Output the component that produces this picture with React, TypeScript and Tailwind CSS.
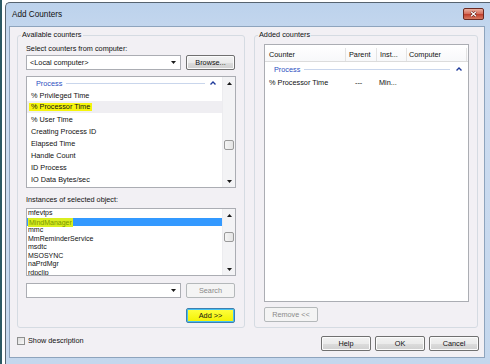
const counters = [
  '% Privileged Time',
  '% Processor Time',
  '% User Time',
  'Creating Process ID',
  'Elapsed Time',
  'Handle Count',
  'ID Process',
  'IO Data Bytes/sec',
];

const instances = ['mfevtps', 'MindManager', 'mmc', 'MmReminderService', 'msdtc', 'MSOSYNC', 'naPrdMgr', 'rdpclip'];

function Tri({ down }: { down?: boolean }) {
  return (
    <svg width="5" height="3" viewBox="0 0 5 3">
      <polygon points={down ? '0,0 5,0 2.5,3' : '0,3 5,3 2.5,0'} fill="#1a1a1a" />
    </svg>
  );
}

function Caret() {
  return (
    <svg width="6" height="4" viewBox="0 0 6 4">
      <polyline points="0.5,3.5 3,1 5.5,3.5" fill="none" stroke="#1e3a9a" strokeWidth="1.4" />
    </svg>
  );
}

function Scrollbar({ thumbTop }: { thumbTop: string }) {
  return (
    <div className="w-[13px] shrink-0 flex flex-col bg-[#f3f3f5] border-l border-[#ececef]">
      <div className="h-[12px] flex items-center justify-center">
        <Tri />
      </div>
      <div className="flex-1">
        <div className={`${thumbTop} mx-[1px] h-[10px] rounded-[2px] border border-[#9a9a9a] bg-[linear-gradient(90deg,#f4f4f4,#e4e4e4)]`} />
      </div>
      <div className="h-[12px] flex items-center justify-center">
        <Tri down />
      </div>
    </div>
  );
}

function Btn({ label, className, disabled }: { label: string; className: string; disabled?: boolean }) {
  return (
    <div
      className={`h-[15px] flex items-center justify-center rounded-[2px] border ${
        disabled
          ? 'border-[#b4b8ba] bg-[#f4f4f4] text-[#8a8a8a]'
          : 'border-[#707070] bg-[linear-gradient(#f2f2f2,#ebebeb_50%,#dddddd_50%,#cfcfcf)] shadow-[inset_0_0_0_1px_#fbfbfb]'
      } ${className}`}
    >
      {label}
    </div>
  );
}

function Combo({ text }: { text?: string }) {
  return (
    <div className="w-[155px] h-[15px] flex items-center border border-[#abadb3] bg-white pl-[3px] pr-[4px]">
      <span className="flex-1">{text}</span>
      <Tri down />
    </div>
  );
}

export default function App() {
  return (
    <div className="w-[490px] h-[364px] overflow-hidden flex bg-white text-[#111] text-[7.3px] leading-[9px] font-['Liberation_Sans',Arial,sans-serif]">
      <div className="w-[5px] shrink-0 border-l-2 border-[#2c5964]" />

      {/* window */}
      <div className="flex-1 mt-[2px] flex flex-col border-l border-t border-[#56636f] rounded-tl-[5px] bg-[linear-gradient(#bcd2ec,#cddcf0_60px,#c4d7ed)] pr-[5px]">
        {/* title bar */}
        <div className="h-[23px] flex items-start justify-between pl-[6px]">
          <span className="mt-[7px] text-[8.2px] leading-[10px]">Add Counters</span>
          <div className="mt-[5px] mr-[1px] w-[21px] h-[12px] rounded-[2px] border border-[#6b2a22] bg-[linear-gradient(#eab0a0,#d56a58_50%,#c0402e_55%,#d77b62)] flex items-center justify-center">
            <svg width="7" height="6" viewBox="0 0 7 6">
              <path d="M1 0.8 L6 5.2 M6 0.8 L1 5.2" stroke="#5a1a12" strokeWidth="2.4" />
              <path d="M1 0.8 L6 5.2 M6 0.8 L1 5.2" stroke="#ffffff" strokeWidth="1.3" />
            </svg>
          </div>
        </div>

        {/* client area */}
        <div className="flex-1 ml-[3px] mb-[6px] border border-[#8ea4bd] bg-[#f2f0f4] flex flex-col">
          <div className="flex gap-[9px] pt-[8px] pl-[7px] pr-[6px]">
            {/* Available counters */}
            <div className="relative w-[228px] h-[293px] border border-[#d5dbe2] rounded-[3px] flex flex-col pl-[8px] pr-[8px]">
              <span className="absolute -top-[6px] left-[3px] px-[1px] bg-[#f2f0f4]">Available counters</span>
              <div className="mt-[8px]">Select counters from computer:</div>
              <div className="mt-[2px] flex items-center gap-[5px]">
                <Combo text="<Local computer>" />
                <Btn label="Browse..." className="w-[49px]" />
              </div>

              <div className="mt-[6px] h-[112px] border border-[#abadb3] bg-white flex overflow-hidden">
                <div className="flex-1 flex flex-col">
                  <div className="h-[12px] shrink-0 flex items-center pl-[9px] pr-[6px] text-[#2b4fbf]">
                    <span>Process</span>
                    <div className="flex-1 h-px bg-[#c9d6ec] ml-[4px] mr-[5px]" />
                    <Caret />
                  </div>
                  {counters.map((c, i) => (
                    <div
                      key={c}
                      className={`h-[12px] shrink-0 flex items-center pl-[4px] text-[#111] ${i === 1 ? 'bg-[#efeef2]' : ''}`}
                    >
                      {i === 1 ? (
                        <span className="bg-[#f6f50c] -ml-[2px] px-[2px] leading-[8px]">{c}</span>
                      ) : (
                        <span>{c}</span>
                      )}
                    </div>
                  ))}
                </div>
                <Scrollbar thumbTop="mt-[51px]" />
              </div>

              <div className="mt-[7px]">Instances of selected object:</div>
              <div className="mt-[4px] h-[68px] border border-[#abadb3] bg-white flex overflow-hidden text-[7px]">
                <div className="flex-1 flex flex-col">
                  {instances.map((c, i) => (
                    <div
                      key={c}
                      className={`h-[8.5px] shrink-0 flex items-center pl-[1px] leading-[8px] ${i === 1 ? 'bg-[#3399ff]' : ''}`}
                    >
                      {i === 1 ? (
                        <span className="bg-[#d9ee20] text-[#7a9600] px-[1px] leading-[9px] mt-[2px]">{c}</span>
                      ) : (
                        <span>{c}</span>
                      )}
                    </div>
                  ))}
                </div>
                <Scrollbar thumbTop="mt-[11px]" />
              </div>

              <div className="mt-[7px] flex items-center gap-[5px]">
                <Combo />
                <Btn label="Search" className="w-[49px]" disabled />
              </div>

              <div className="mt-[10px] flex justify-end pr-[1px]">
                <div className="w-[49px] h-[15px] rounded-[2px] border border-[#3c7fb1] shadow-[inset_0_0_0_1px_#48c0f0] bg-[linear-gradient(#ffff40,#f2f200)] flex items-center justify-center">
                  Add &gt;&gt;
                </div>
              </div>
            </div>

            {/* Added counters */}
            <div className="relative w-[224px] h-[293px] border border-[#d5dbe2] rounded-[3px] flex flex-col pl-[9px]">
              <span className="absolute -top-[6px] left-[3px] px-[1px] bg-[#f2f0f4]">Added counters</span>
              <div className="mt-[8px] w-[205px] h-[258px] border border-[#abadb3] bg-white flex flex-col">
                <div className="h-[17px] flex border-b border-[#dcdcdc] bg-[linear-gradient(#ffffff,#f7f8fa)] pt-[3px]">
                  <div className="w-[81px] pl-[4px] border-r border-[#e3e3e3] flex items-center">Counter</div>
                  <div className="w-[31px] pl-[3px] border-r border-[#e3e3e3] flex items-center">Parent</div>
                  <div className="w-[30px] pl-[3px] border-r border-[#e3e3e3] flex items-center">Inst...</div>
                  <div className="w-[60px] pl-[2px] border-r border-[#e3e3e3] flex items-center">Computer</div>
                  <div className="flex-1" />
                </div>
                <div className="h-[14px] flex items-center pl-[9px] pr-[6px] text-[#2b4fbf]">
                  <span>Process</span>
                  <div className="flex-1 h-px bg-[#c9d6ec] ml-[4px] mr-[6px]" />
                  <Caret />
                </div>
                <div className="h-[12px] flex items-center text-[#111]">
                  <div className="w-[81px] pl-[4px]">% Processor Time</div>
                  <div className="w-[31px] pl-[9px]">---</div>
                  <div className="w-[30px] pl-[2px]">Min...</div>
                </div>
              </div>
              <div className="mt-[5px]">
                <Btn label="Remove <<" className="w-[54px]" disabled />
              </div>
            </div>
          </div>

          {/* bottom row */}
          <div className="mt-[8px] flex items-start pl-[7px] pr-[5px]">
            <div className="flex items-center">
              <div className="w-[8px] h-[8px] border border-[#8e8f8f] bg-[linear-gradient(135deg,#dcdcdc,#f8f8f8)]" />
              <span className="ml-[3px]">Show description</span>
            </div>
            <div className="flex-1" />
            <div className="flex gap-[4px]">
              <Btn label="Help" className="w-[50px]" />
              <Btn label="OK" className="w-[50px]" />
              <Btn label="Cancel" className="w-[50px]" />
            </div>
          </div>
        </div>
      </div>
    </div>
  );
}
